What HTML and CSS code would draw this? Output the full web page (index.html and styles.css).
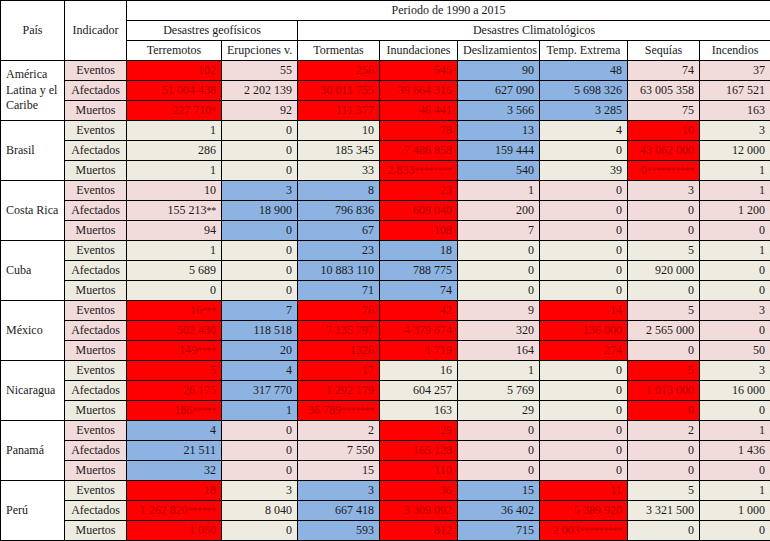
FILE: index.html
```html
<!DOCTYPE html>
<html lang="es">
<head>
<meta charset="utf-8">
<title>Desastres 1990 a 2015</title>
<link rel="stylesheet" href="styles.css">
</head>
<body>
<table class="data">
  <colgroup>
    <col class="c-pais"><col class="c-ind"><col class="c-terr"><col class="c-erup"><col class="c-torm"><col class="c-inun"><col class="c-desl"><col class="c-temp"><col class="c-seq"><col class="c-inc">
  </colgroup>
  <thead>
    <tr>
      <th rowspan="3" class="hd">País</th>
      <th rowspan="3" class="hd">Indicador</th>
      <th colspan="8" class="hd">Periodo de 1990 a 2015</th>
    </tr>
    <tr>
      <th colspan="2" class="hd">Desastres geofísicos</th>
      <th colspan="6" class="hd">Desastres Climatológicos</th>
    </tr>
    <tr>
      <th class="hd">Terremotos</th>
      <th class="hd">Erupciones v.</th>
      <th class="hd">Tormentas</th>
      <th class="hd">Inundaciones</th>
      <th class="hd">Deslizamientos</th>
      <th class="hd">Temp. Extrema</th>
      <th class="hd">Sequías</th>
      <th class="hd">Incendios</th>
    </tr>
  </thead>
  <tbody>
    <tr class="grp">
      <th rowspan="3" class="country multi">América Latina y el Caribe</th>
      <td class="ind p">Eventos</td>
      <td class="r">102</td><td class="p">55</td><td class="r">256</td><td class="r">545</td><td class="b">90</td><td class="b">48</td><td class="p">74</td><td class="p">37</td>
    </tr>
    <tr>
      <td class="ind p">Afectados</td>
      <td class="r">51 004 438</td><td class="p">2 202 139</td><td class="r">30 011 755</td><td class="r">39 664 316</td><td class="b">627 090</td><td class="b">5 698 326</td><td class="p">63 005 358</td><td class="p">167 521</td>
    </tr>
    <tr>
      <td class="ind p">Muertos</td>
      <td class="r">227 710<span class="ast">*</span></td><td class="p">92</td><td class="r">111 377</td><td class="r">46 441</td><td class="b">3 566</td><td class="b">3 285</td><td class="p">75</td><td class="p">163</td>
    </tr>

    <tr class="grp">
      <th rowspan="3" class="country">Brasil</th>
      <td class="ind e">Eventos</td>
      <td class="e">1</td><td class="e">0</td><td class="e">10</td><td class="r">78</td><td class="b">13</td><td class="e">4</td><td class="r">10</td><td class="e">3</td>
    </tr>
    <tr>
      <td class="ind e">Afectados</td>
      <td class="e">286</td><td class="e">0</td><td class="e">185 345</td><td class="r">7 486 858</td><td class="b">159 444</td><td class="e">0</td><td class="r">43 062 000</td><td class="e">12 000</td>
    </tr>
    <tr>
      <td class="ind e">Muertos</td>
      <td class="e">1</td><td class="e">0</td><td class="e">33</td><td class="r">2 833<span class="ast">********</span></td><td class="b">540</td><td class="e">39</td><td class="r">0<span class="ast">**********</span></td><td class="e">1</td>
    </tr>

    <tr class="grp">
      <th rowspan="3" class="country">Costa Rica</th>
      <td class="ind p">Eventos</td>
      <td class="p">10</td><td class="b">3</td><td class="b">8</td><td class="r">23</td><td class="p">1</td><td class="p">0</td><td class="p">3</td><td class="p">1</td>
    </tr>
    <tr>
      <td class="ind p">Afectados</td>
      <td class="p">155 213<span class="ast">**</span></td><td class="b">18 900</td><td class="b">796 836</td><td class="r">609 040</td><td class="p">200</td><td class="p">0</td><td class="p">0</td><td class="p">1 200</td>
    </tr>
    <tr>
      <td class="ind p">Muertos</td>
      <td class="p">94</td><td class="b">0</td><td class="b">67</td><td class="r">108</td><td class="p">7</td><td class="p">0</td><td class="p">0</td><td class="p">0</td>
    </tr>

    <tr class="grp">
      <th rowspan="3" class="country">Cuba</th>
      <td class="ind e">Eventos</td>
      <td class="e">1</td><td class="e">0</td><td class="b">23</td><td class="b">18</td><td class="e">0</td><td class="e">0</td><td class="e">5</td><td class="e">1</td>
    </tr>
    <tr>
      <td class="ind e">Afectados</td>
      <td class="e">5 689</td><td class="e">0</td><td class="b">10 883 110</td><td class="b">788 775</td><td class="e">0</td><td class="e">0</td><td class="e">920 000</td><td class="e">0</td>
    </tr>
    <tr>
      <td class="ind e">Muertos</td>
      <td class="e">0</td><td class="e">0</td><td class="b">71</td><td class="b">74</td><td class="e">0</td><td class="e">0</td><td class="e">0</td><td class="e">0</td>
    </tr>

    <tr class="grp">
      <th rowspan="3" class="country">México</th>
      <td class="ind p">Eventos</td>
      <td class="r">16<span class="ast">***</span></td><td class="b">7</td><td class="r">76</td><td class="r">42</td><td class="p">9</td><td class="r">14</td><td class="p">5</td><td class="p">3</td>
    </tr>
    <tr>
      <td class="ind p">Afectados</td>
      <td class="r">502 430</td><td class="b">118 518</td><td class="r">7 135 797</td><td class="r">4 379 674</td><td class="p">320</td><td class="r">136 000</td><td class="p">2 565 000</td><td class="p">0</td>
    </tr>
    <tr>
      <td class="ind p">Muertos</td>
      <td class="r">149<span class="ast">****</span></td><td class="b">20</td><td class="r">1326</td><td class="r">1 719</td><td class="p">164</td><td class="r">274</td><td class="p">0</td><td class="p">50</td>
    </tr>

    <tr class="grp">
      <th rowspan="3" class="country">Nicaragua</th>
      <td class="ind e">Eventos</td>
      <td class="r">5</td><td class="b">4</td><td class="r">17</td><td class="e">16</td><td class="e">1</td><td class="e">0</td><td class="r">5</td><td class="e">3</td>
    </tr>
    <tr>
      <td class="ind e">Afectados</td>
      <td class="r">26 175</td><td class="b">317 770</td><td class="r">1 292 179</td><td class="e">604 257</td><td class="e">5 769</td><td class="e">0</td><td class="r">1 013 000</td><td class="e">16 000</td>
    </tr>
    <tr>
      <td class="ind e">Muertos</td>
      <td class="r">186<span class="ast">*****</span></td><td class="b">1</td><td class="r">36 789<span class="ast">*******</span></td><td class="e">163</td><td class="e">29</td><td class="e">0</td><td class="r">0</td><td class="e">0</td>
    </tr>

    <tr class="grp">
      <th rowspan="3" class="country">Panamá</th>
      <td class="ind p">Eventos</td>
      <td class="b">4</td><td class="p">0</td><td class="p">2</td><td class="r">29</td><td class="p">0</td><td class="p">0</td><td class="p">2</td><td class="p">1</td>
    </tr>
    <tr>
      <td class="ind p">Afectados</td>
      <td class="b">21 511</td><td class="p">0</td><td class="p">7 550</td><td class="r">165 128</td><td class="p">0</td><td class="p">0</td><td class="p">0</td><td class="p">1 436</td>
    </tr>
    <tr>
      <td class="ind p">Muertos</td>
      <td class="b">32</td><td class="p">0</td><td class="p">15</td><td class="r">110</td><td class="p">0</td><td class="p">0</td><td class="p">0</td><td class="p">0</td>
    </tr>

    <tr class="grp">
      <th rowspan="3" class="country">Perú</th>
      <td class="ind e">Eventos</td>
      <td class="r">18</td><td class="e">3</td><td class="b">3</td><td class="r">36</td><td class="b">15</td><td class="r">11</td><td class="e">5</td><td class="e">1</td>
    </tr>
    <tr>
      <td class="ind e">Afectados</td>
      <td class="r">1 262 820<span class="ast">******</span></td><td class="e">8 040</td><td class="b">667 418</td><td class="r">3 309 092</td><td class="b">36 402</td><td class="r">5 389 920</td><td class="e">3 321 500</td><td class="e">1 000</td>
    </tr>
    <tr>
      <td class="ind e">Muertos</td>
      <td class="r">1 050</td><td class="e">0</td><td class="b">593</td><td class="r">812</td><td class="b">715</td><td class="r">2 003<span class="ast">*********</span></td><td class="e">0</td><td class="e">0</td>
    </tr>
  </tbody>
</table>
</body>
</html>
```

FILE: styles.css
```css
html, body {
  margin: 0;
  padding: 0;
  background: #ffffff;
}

.data {
  border-collapse: collapse;
  table-layout: fixed;
  width: 770px;
  font-family: "Liberation Serif", "Times New Roman", serif;
  font-size: 12px;
  color: #1a1a1a;
}

.c-pais { width: 64px; }
.c-ind { width: 62px; }
.c-terr { width: 95px; }
.c-erup { width: 76px; }
.c-torm { width: 82px; }
.c-inun { width: 78px; }
.c-desl { width: 82px; }
.c-temp { width: 88px; }
.c-seq { width: 72px; }
.c-inc { width: 71px; }

.data tr {
  height: 20px;
}

.data th,
.data td {
  border: 1px solid #000;
  padding: 0 5px;
  line-height: 15px;
  white-space: nowrap;
  vertical-align: middle;
  overflow: visible;
}

.data td {
  text-align: right;
}

.hd {
  font-weight: normal;
  text-align: center;
  background: #ffffff;
  padding: 0 3px;
}

.country {
  font-weight: normal;
  text-align: left;
  background: #ffffff;
  padding-left: 5px;
}

.country.multi {
  white-space: normal;
  line-height: 15.5px;
}

.data td.ind {
  text-align: center;
  padding: 0 3px;
}

.r {
  background: #ff0000;
  color: #b30000;
}

.b {
  background: #8db3e2;
}

.p {
  background: #f2dcdb;
}

.e {
  background: #eeece1;
}

.ast {
  font-size: 10px;
  letter-spacing: -0.3px;
}
```
